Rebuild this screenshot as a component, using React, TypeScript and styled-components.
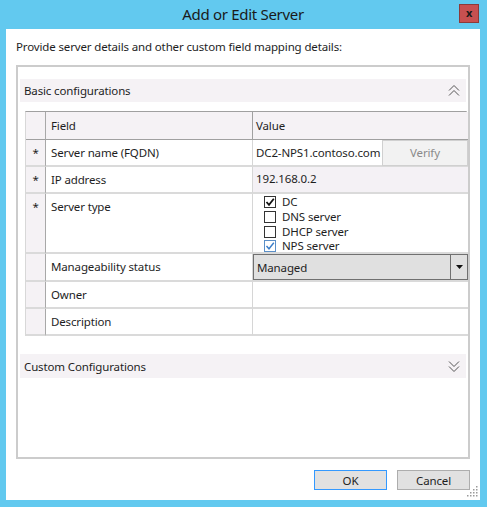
import React from "react";
import styled, { createGlobalStyle } from "styled-components";

const Global = createGlobalStyle`
  html, body { margin: 0; padding: 0; background: #62c9ef; }
  body { font-family: "Noto Sans", "Open Sans", sans-serif; color: #1e1e1e; letter-spacing: -0.14px; }
  * { box-sizing: border-box; }
`;

const Frame = styled.div`
  width: 487px;
  height: 507px;
  background: #62c9ef;
  padding: 0 7px 7px 6px;
  display: flex;
  flex-direction: column;
`;

const TitleBar = styled.div`
  height: 29px;
  position: relative;
  display: flex;
  align-items: center;
  justify-content: center;
  padding-bottom: 2px;
`;

const Title = styled.div`
  font-size: 15px;
  color: #1a1a1a;
  letter-spacing: -0.3px;
`;

const CloseButton = styled.div`
  position: absolute;
  right: 1px;
  top: 4px;
  width: 20px;
  height: 19px;
  background: #c75050;
  border: 1px solid #8c3a3a;
  display: flex;
  align-items: center;
  justify-content: center;
  font-size: 11px;
  font-weight: bold;
  color: #1a1a1a;
  line-height: 1;
  padding-bottom: 2px;
`;

const Client = styled.div`
  flex: 1;
  background: #ffffff;
  padding: 10px 10px 0 10px;
  display: flex;
  flex-direction: column;
  position: relative;
`;

const Intro = styled.div`
  font-size: 11.5px;
  line-height: 16px;
  margin-bottom: 10px;
`;

const GroupBox = styled.div`
  height: 394px;
  border: 2px solid #cccccc;
  padding: 12px 2px 0 2px;
  display: flex;
  flex-direction: column;
`;

const SectionHeader = styled.div<{ $h: number }>`
  height: ${(p) => p.$h}px;
  background: #f5f2f5;
  display: flex;
  align-items: center;
  justify-content: space-between;
  padding: 0 6px 0 4px;
  font-size: 11.5px;
`;

const Table = styled.div`
  margin: 9px -1px 18px 5px;
  display: grid;
  grid-template-columns: 20px 207px 215px;
  border-top: 1px solid #a0a0a0;
  border-left: 1px solid #d8d8d8;
  border-right: 1px solid #d8d8d8;
  font-size: 11.5px;
`;

type Kind = "star" | "field" | "value";

const sidePad = (k: Kind) => (k === "star" ? "0" : k === "field" ? "5px" : "3px");

const Cell = styled.div<{ $kind: Kind; $head?: boolean; $h: number; $bg?: string; $pt?: number; $flush?: boolean }>`
  height: ${(p) => p.$h}px;
  background: ${(p) => p.$bg ?? (p.$kind === "star" || p.$head ? "#f5f2f5" : "#ffffff")};
  border-bottom: ${(p) => (p.$head ? "1px solid #a0a0a0" : "2px solid #dadada")};
  border-right: ${(p) =>
    p.$kind === "value" ? "none" : p.$kind === "star" ? "1px solid #a8a8a8" : p.$head ? "1px solid #a0a0a0" : "1px solid #d6d6d6"};
  padding: ${(p) => (p.$flush ? "0" : `${p.$pt ?? 5}px 0 0 ${sidePad(p.$kind)}`)};
  line-height: 16px;
  white-space: nowrap;
  display: flex;
  align-items: flex-start;
  justify-content: ${(p) => (p.$kind === "star" ? "center" : "flex-start")};
`;

const FieldInput = styled.div`
  flex: 1;
  padding: 5px 0 0 3px;
  white-space: nowrap;
  overflow: hidden;
`;

const VerifyButton = styled.div`
  width: 86px;
  height: 26px;
  background: #f2f2f2;
  border: 1px solid #d0d0d0;
  color: #8a8a8a;
  display: flex;
  align-items: center;
  justify-content: center;
  font-size: 11.5px;
`;

const CheckList = styled.div`
  display: flex;
  flex-direction: column;
  padding: 1px 0 0 8px;
`;

const CheckItem = styled.div`
  height: 14.7px;
  display: flex;
  align-items: center;
  gap: 6px;
  line-height: 14px;
`;

const Box = styled.span<{ $tone: "black" | "blue" | "none" }>`
  width: 12px;
  height: 12px;
  border: 1px solid ${(p) => (p.$tone === "blue" ? "#5b8fc7" : "#333333")};
  background: #ffffff;
  display: inline-flex;
  align-items: center;
  justify-content: center;
`;

const Combo = styled.div`
  flex: 1;
  height: 100%;
  background: #e0e0e0;
  border: 1px solid #707070;
  display: flex;
`;

const ComboText = styled.div`
  flex: 1;
  padding: 5px 0 0 3px;
`;

const ComboArrow = styled.div`
  width: 17px;
  border-left: 1px solid #707070;
  display: flex;
  align-items: center;
  justify-content: center;
`;

const ButtonRow = styled.div`
  display: flex;
  justify-content: flex-end;
  gap: 10px;
  margin-top: 11px;
`;

const DialogButton = styled.div<{ $primary?: boolean }>`
  width: 73px;
  height: 20px;
  background: #e1e1e1;
  border: 1px solid ${(p) => (p.$primary ? "#3399ff" : "#adadad")};
  display: flex;
  align-items: center;
  justify-content: center;
  font-size: 11.5px;
`;

const Grip = styled.svg`
  position: absolute;
  right: 2px;
  bottom: 3px;
`;

const Chevrons = ({ up }: { up: boolean }) => (
  <svg width="12" height="13" viewBox="0 0 12 13">
    {up ? (
      <g fill="none" stroke="#555" strokeWidth="1">
        <path d="M1 6.5 L6 1.5 L11 6.5" />
        <path d="M1 11.5 L6 6.5 L11 11.5" />
      </g>
    ) : (
      <g fill="none" stroke="#555" strokeWidth="1">
        <path d="M1 1.5 L6 6.5 L11 1.5" />
        <path d="M1 6.5 L6 11.5 L11 6.5" />
      </g>
    )}
  </svg>
);

const Check = ({ color, w }: { color: string; w: number }) => (
  <svg width="10" height="10" viewBox="0 0 10 10">
    <path d="M1.5 5 L4 7.8 L8.8 1.8" fill="none" stroke={color} strokeWidth={w} />
  </svg>
);

type Row = {
  star: boolean;
  field: string;
  h: number;
  value: React.ReactNode;
  bg?: string;
  pt?: number;
  flush?: boolean;
};

const rows: Row[] = [
  {
    star: true,
    field: "Server name (FQDN)",
    h: 27,
    flush: true,
    value: (
      <>
        <FieldInput>DC2-NPS1.contoso.com</FieldInput>
        <VerifyButton>Verify</VerifyButton>
      </>
    ),
  },
  { star: true, field: "IP address", h: 27, bg: "#f4f1f5", pt: 4, value: <span>192.168.0.2</span> },
  {
    star: true,
    field: "Server type",
    h: 60,
    pt: 0,
    value: (
      <CheckList>
        <CheckItem>
          <Box $tone="black"><Check color="#111" w={1.8} /></Box>DC
        </CheckItem>
        <CheckItem>
          <Box $tone="none" />DNS server
        </CheckItem>
        <CheckItem>
          <Box $tone="none" />DHCP server
        </CheckItem>
        <CheckItem>
          <Box $tone="blue"><Check color="#3a7dc9" w={1.4} /></Box>NPS server
        </CheckItem>
      </CheckList>
    ),
  },
  {
    star: false,
    field: "Manageability status",
    h: 28,
    flush: true,
    value: (
      <Combo>
        <ComboText>Managed</ComboText>
        <ComboArrow>
          <svg width="7" height="4" viewBox="0 0 7 4">
            <path d="M0 0 L7 0 L3.5 4 Z" fill="#111" />
          </svg>
        </ComboArrow>
      </Combo>
    ),
  },
  { star: false, field: "Owner", h: 27, value: null },
  { star: false, field: "Description", h: 27, value: null },
];

export default function App() {
  return (
    <>
      <Global />
      <Frame>
        <TitleBar>
          <Title>Add or Edit Server</Title>
          <CloseButton>x</CloseButton>
        </TitleBar>
        <Client>
          <Intro>Provide server details and other custom field mapping details:</Intro>
          <GroupBox>
            <SectionHeader $h={23}>
              <span>Basic configurations</span>
              <Chevrons up />
            </SectionHeader>
            <Table>
              <Cell $kind="star" $head $h={28} />
              <Cell $kind="field" $head $h={28} $pt={6}>Field</Cell>
              <Cell $kind="value" $head $h={28} $pt={6}>Value</Cell>
              {rows.map((r) => (
                <React.Fragment key={r.field}>
                  <Cell $kind="star" $h={r.h}>{r.star ? "*" : ""}</Cell>
                  <Cell $kind="field" $h={r.h}>{r.field}</Cell>
                  <Cell $kind="value" $h={r.h} $bg={r.bg} $pt={r.pt} $flush={r.flush}>
                    {r.value}
                  </Cell>
                </React.Fragment>
              ))}
            </Table>
            <SectionHeader $h={24}>
              <span>Custom Configurations</span>
              <Chevrons up={false} />
            </SectionHeader>
          </GroupBox>
          <ButtonRow>
            <DialogButton $primary>OK</DialogButton>
            <DialogButton>Cancel</DialogButton>
          </ButtonRow>
          <Grip width="12" height="12" viewBox="0 0 12 12">
            {[
              [10, 2], [10, 5], [10, 8], [10, 11],
              [7, 5], [7, 8], [7, 11],
              [4, 8], [4, 11],
              [1, 11],
            ].map(([x, y]) => (
              <rect key={`${x}-${y}`} x={x} y={y - 1} width="1.5" height="1.5" fill="#9a9a9a" />
            ))}
          </Grip>
        </Client>
      </Frame>
    </>
  );
}
